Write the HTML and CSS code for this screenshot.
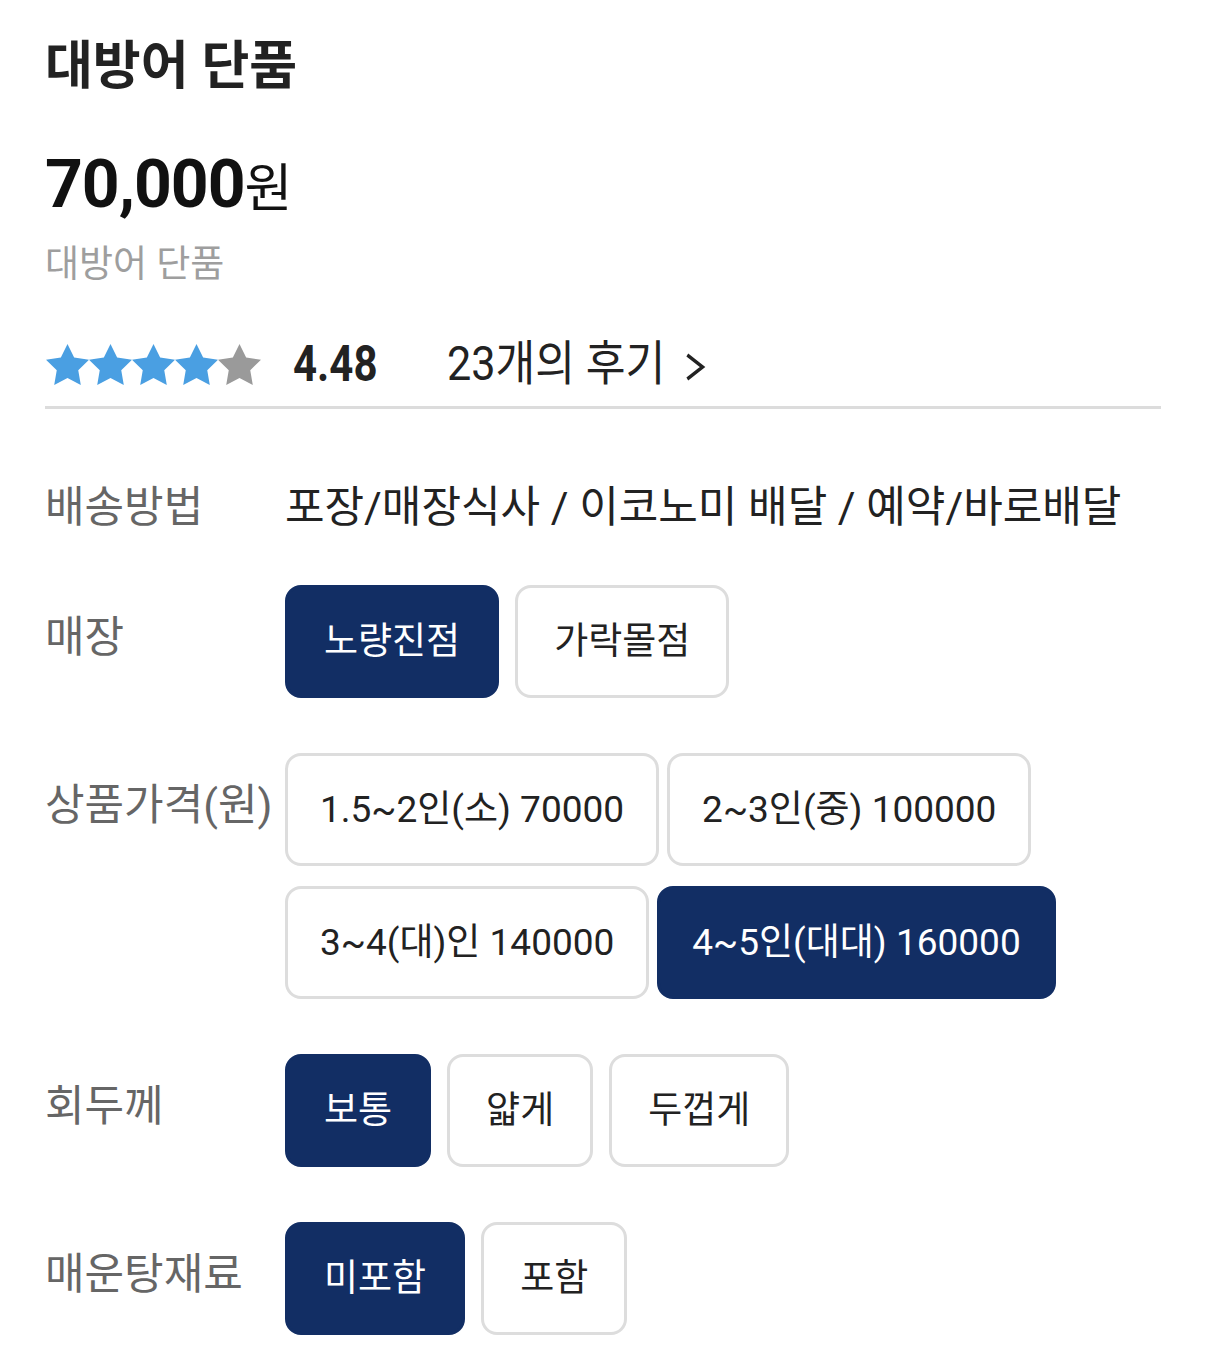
FILE: index.html
```html
<!DOCTYPE html>
<html lang="ko">
<head>
    <meta charset="UTF-8">
    <meta name="viewport" content="width=device-width, initial-scale=1.0">
    <title>대방어 단품</title>
    <link rel="stylesheet" href="styles.css">
</head>
<body>
    <div class="product">
        <h1 class="product-title">대방어 단품</h1>
        <div class="product-price">70,000<span class="won">원</span></div>
        <p class="product-desc">대방어 단품</p>

        <div class="rating">
            <div class="stars">
                <svg class="star on" viewBox="2 2 20 19" width="43" height="41"><path d="M12 2l3.09 6.26L22 9.27l-5 4.87 1.18 6.88L12 17.77l-6.18 3.25L7 14.14 2 9.27l6.91-1.01L12 2z"/></svg>
                <svg class="star on" viewBox="2 2 20 19" width="43" height="41"><path d="M12 2l3.09 6.26L22 9.27l-5 4.87 1.18 6.88L12 17.77l-6.18 3.25L7 14.14 2 9.27l6.91-1.01L12 2z"/></svg>
                <svg class="star on" viewBox="2 2 20 19" width="43" height="41"><path d="M12 2l3.09 6.26L22 9.27l-5 4.87 1.18 6.88L12 17.77l-6.18 3.25L7 14.14 2 9.27l6.91-1.01L12 2z"/></svg>
                <svg class="star on" viewBox="2 2 20 19" width="43" height="41"><path d="M12 2l3.09 6.26L22 9.27l-5 4.87 1.18 6.88L12 17.77l-6.18 3.25L7 14.14 2 9.27l6.91-1.01L12 2z"/></svg>
                <svg class="star" viewBox="2 2 20 19" width="43" height="41"><path d="M12 2l3.09 6.26L22 9.27l-5 4.87 1.18 6.88L12 17.77l-6.18 3.25L7 14.14 2 9.27l6.91-1.01L12 2z"/></svg>
            </div>
            <span class="score"><span class="condensed">4.48</span></span>
            <a href="#" class="reviews"><span class="condensed">23개의 후기<svg class="chevron" viewBox="0 0 24 30" width="24" height="30"><polyline points="3,3 20,15 3,27"/></svg></span></a>
        </div>

        <div class="options">
            <div class="option-row first">
                <div class="option-label">배송방법</div>
                <div class="option-value">포장/매장식사 / 이코노미 배달 / 예약/바로배달</div>
            </div>
            <div class="option-row">
                <div class="option-label with-buttons">매장</div>
                <div class="choices">
                    <button class="choice selected">노량진점</button>
                    <button class="choice">가락몰점</button>
                </div>
            </div>
            <div class="option-row">
                <div class="option-label with-buttons">상품가격(원)</div>
                <div class="choices tight">
                    <button class="choice">1.5~2인(소) 70000</button>
                    <button class="choice">2~3인(중) 100000</button>
                    <button class="choice">3~4(대)인 140000</button>
                    <button class="choice selected">4~5인(대대) 160000</button>
                </div>
            </div>
            <div class="option-row">
                <div class="option-label with-buttons">회두께</div>
                <div class="choices">
                    <button class="choice selected">보통</button>
                    <button class="choice">얇게</button>
                    <button class="choice">두껍게</button>
                </div>
            </div>
            <div class="option-row">
                <div class="option-label with-buttons">매운탕재료</div>
                <div class="choices">
                    <button class="choice selected">미포함</button>
                    <button class="choice">포함</button>
                </div>
            </div>
        </div>
    </div>
</body>
</html>
```

FILE: styles.css
```css
body {
    font-family: Roboto, "Noto Sans CJK KR", sans-serif;
    background-color: #fff;
    color: #222;
    margin: 0;
    padding: 0;
}
.product {
    padding: 0 45px;
}
.product-title {
    margin: 37px 0 0;
    font-size: 52px;
    line-height: 60px;
    font-weight: 700;
    color: #222;
}
.product-price {
    margin-top: 48px;
    font-size: 66px;
    line-height: 80px;
    font-weight: 700;
    color: #111;
    letter-spacing: -1px;
}
.product-price .won {
    font-size: 52px;
    font-weight: 400;
    letter-spacing: 0;
}
.product-desc {
    margin: 11px 0 0;
    font-size: 37px;
    line-height: 48px;
    color: #9e9e9e;
}
.rating {
    display: flex;
    align-items: center;
    margin-top: 45px;
    padding-bottom: 12px;
    border-bottom: 3px solid #dcdcdc;
}
.stars {
    display: flex;
    margin-left: 1px;
    width: 247px;
}
.star {
    fill: #4a9fe2;
}
.star:not(.on) {
    fill: #9a9a9a;
}
.score {
    width: 154px;
    font-size: 50px;
    line-height: 60px;
    font-weight: 700;
    color: #222;
}
.condensed {
    display: inline-block;
    transform: scaleX(0.84);
    transform-origin: left center;
    white-space: nowrap;
}
.reviews {
    font-size: 48px;
    line-height: 60px;
    color: #222;
    text-decoration: none;
}
.reviews .condensed {
    transform: scaleX(0.9);
}
.chevron {
    margin-left: 21px;
    fill: none;
    stroke: #222;
    stroke-width: 3.5;
    vertical-align: middle;
}
.options {
    margin-top: 70px;
}
.option-row {
    display: grid;
    grid-template-columns: 240px 1fr;
    margin-bottom: 55px;
}
.option-row.first {
    margin-bottom: 50px;
}
.option-label {
    font-size: 43px;
    line-height: 56px;
    color: #666;
}
.option-label.with-buttons {
    padding-top: 24px;
}
.option-value {
    font-size: 43px;
    line-height: 56px;
    color: #222;
}
.choices {
    display: flex;
    flex-wrap: wrap;
    gap: 16px;
}
.choices.tight {
    gap: 20px 8px;
}
.choice {
    padding: 32px 36px;
    font-family: Roboto, "Noto Sans CJK KR", sans-serif;
    font-size: 37px;
    line-height: 43px;
    color: #222;
    background: #fff;
    border: 3px solid #dddddd;
    border-radius: 16px;
    cursor: pointer;
}
.choices.tight .choice {
    padding: 32px;
}
.choice.selected {
    background: #122e64;
    border-color: #122e64;
    color: #fff;
}
```
